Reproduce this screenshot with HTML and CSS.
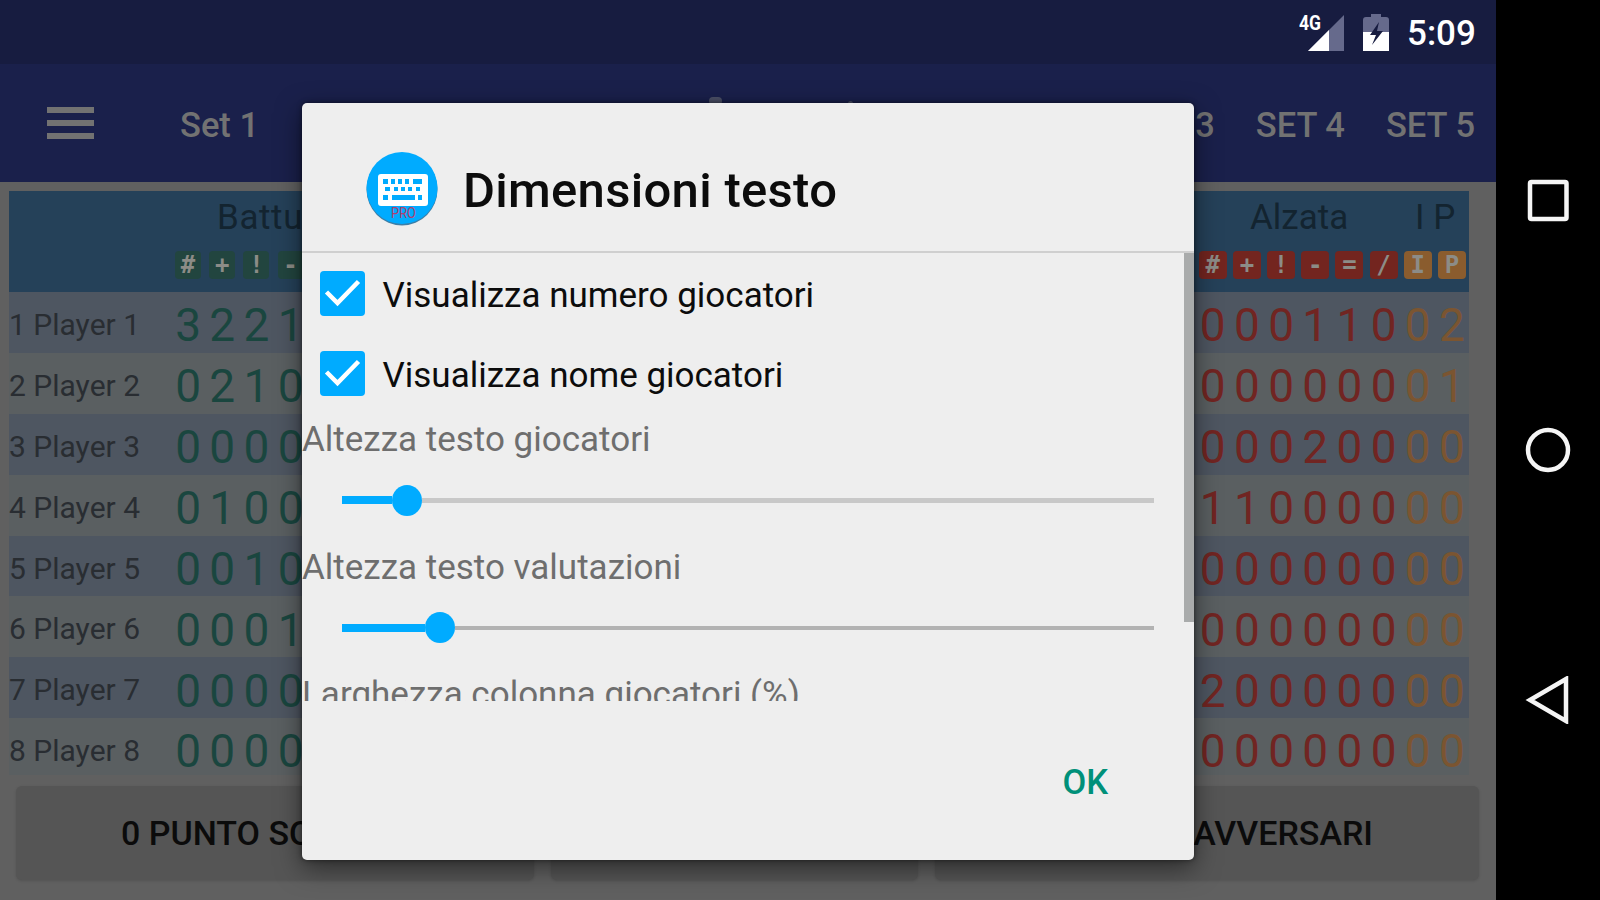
FILE: index.html
```html
<!DOCTYPE html>
<html lang="it">
  <head>
    <title>Dimensioni testo</title>
    <meta charset="utf-8" />
    <link rel="stylesheet" href="styles.css">
  </head>
  <body>
    <div class="screen">
      <div class="status-bar">
        <svg class="signal" width="48" height="40" viewBox="0 0 48 40">
          <path d="M45 2V38H9z" fill="#666a8c" />
          <path d="M30 17V38H9z" fill="#fff" />
          <text x="0" y="17" class="network" textLength="22" lengthAdjust="spacingAndGlyphs">4G</text>
        </svg>
        <svg class="battery" width="26" height="38" viewBox="0 0 26 38">
          <path d="M8 4V1h10v3h5q3 0 3 3V19H0V7q0-3 3-3z" fill="#666a8c" />
          <path d="M0 19H26V38H0z" fill="#fff" />
          <path d="M16 9L7 22h6L9 32l11-14h-6z" fill="#171c40" />
        </svg>
        <span class="clock">5:09</span>
      </div>

      <div class="toolbar">
        <div class="menu-icon"><i></i><i></i><i></i></div>
        <b class="title">Set 1</b>
        <div class="sets"><span>SET 3</span><span>SET 4</span><span>SET 5</span></div>
      </div>

      <div class="scores">
        <div class="scores-head">
          <div class="groups"><span class="serve">Battuta</span><span class="set">Alzata</span><span class="ip">I P</span></div>
          <div class="badges" id="badges"></div>
        </div>
        <div id="rows"></div>
      </div>

      <div class="points">
        <div class="point home"><span>0 PUNTO SQUADRA</span></div>
        <div class="point undo"></div>
        <div class="point away"><span>0 PUNTO AVVERSARI</span></div>
      </div>
    </div>

    <div class="nav-bar">
      <svg width="48" height="48" viewBox="0 0 48 48"><rect x="6" y="6" width="36.500" height="37" rx="1.500" /></svg>
      <svg width="48" height="48" viewBox="0 0 48 48"><circle cx="24" cy="24" r="20" /></svg>
      <svg width="48" height="48" viewBox="0 0 48 48"><path d="M42 3V45L6 24z" /></svg>
    </div>

    <div class="peek"><i></i><i></i></div>

    <div class="dialog">
      <div class="dialog-head">
        <svg width="72" height="74" viewBox="0 0 72 74">
          <ellipse cx="36" cy="37.500" rx="35.500" ry="36" fill="#3c7fa8" />
          <ellipse cx="36" cy="36" rx="35.500" ry="36" fill="#00abff" />
          <rect x="12" y="22" width="50" height="32" rx="3" fill="#fff" />
          <g fill="#00abff">
            <path d="M17 27h5v5h-5zM25 27h4v5h-4zM32 27h4v5h-4zM39 27h4v5h-4zM47 27h9v5h-9z" />
            <path d="M19 35h5v4h-5zM28 35h4v4h-4zM35 35h4v4h-4zM42 35h4v4h-4zM50 35h4v4h-4z" />
            <path d="M17 43h5v5h-5zM26 43h23v5h-23zM52 43h4v5h-4z" />
          </g>
          <text x="25" y="66" class="pro" textLength="25" lengthAdjust="spacingAndGlyphs">PRO</text>
        </svg>
        <h1>Dimensioni testo</h1>
      </div>

      <div class="dialog-body">
        <div class="options">
          <label class="check">
            <svg width="45" height="45" viewBox="0 0 45 45"><rect width="45" height="45" rx="4" /><path d="M6.500 21L17.500 32L38.500 10.500" /></svg>
            <span>Visualizza numero giocatori</span>
          </label>
          <label class="check">
            <svg width="45" height="45" viewBox="0 0 45 45"><rect width="45" height="45" rx="4" /><path d="M6.500 21L17.500 32L38.500 10.500" /></svg>
            <span>Visualizza nome giocatori</span>
          </label>
          <p>Altezza testo giocatori</p>
          <div class="slider players"><i class="filled"></i><i class="thumb"></i><i class="rest"></i></div>
          <p>Altezza testo valutazioni</p>
          <div class="slider ratings"><i class="filled"></i><i class="thumb"></i><i class="rest"></i></div>
          <p>Larghezza colonna giocatori (%)</p>
        </div>
        <div class="scrollbar"></div>
      </div>

      <div class="dialog-foot"><b>OK</b></div>
    </div>

    <script>
      // first four serve ratings, then the six set ratings plus I and P
      const players = [
        ["3221", "00011002"],
        ["0210", "00000001"],
        ["0000", "00020000"],
        ["0100", "11000000"],
        ["0010", "00000000"],
        ["0001", "00000000"],
        ["0000", "20000000"],
        ["0000", "00000000"],
      ]

      function cells(left, right) {
        const all = [...left].map(c => `<span class="cell green"><i>${c}</i></span>`)
        all.push('<span class="spacer"></span>')

        ;[...right].forEach((c, i) => {
          all.push(`<span class="cell ${i < 6 ? "red" : "orange"}"><i>${c}</i></span>`)
        })

        return all.join("")
      }

      document.getElementById("badges").innerHTML = cells("#+!-", "#+!-=/IP")

      document.getElementById("rows").innerHTML = players
        .map((p, i) => `<div class="row"><span class="name">${i + 1} Player ${i + 1}</span>${cells(p[0], p[1])}</div>`)
        .join("")
    </script>
  </body>
</html>
```

FILE: styles.css
```css
* {
  box-sizing: border-box;
}

body {
  display: flex;
  width: 1600px;
  height: 900px;
  margin: 0;
  overflow: hidden;
  background: #000;
  font-family: Roboto, sans-serif;
}

i {
  font-style: normal;
}

.screen {
  width: 1496px;
  height: 900px;
  background: #606060;
}

.status-bar {
  display: flex;
  height: 64px;
  padding: 13px 22px 0 0;
  justify-content: flex-end;
  background: #171c40;
}

.signal {
  margin-right: 16px;
}

.network {
  font-size: 21px;
  font-weight: bold;
  fill: #fff;
}

.battery {
  margin-right: 18px;
}

.clock {
  width: 67px;
  color: #fff;
  font-size: 35px;
  font-weight: 500;
  line-height: 42px;
  white-space: nowrap;
}

.toolbar {
  display: flex;
  height: 118px;
  padding: 0 21px 0 47px;
  align-items: center;
  background: #1a204b;
  color: #727272;
  font-size: 34.5px;
  font-weight: 500;
}

.menu-icon {
  display: flex;
  width: 47px;
  flex-direction: column;
  gap: 7px;
}

.menu-icon i {
  height: 6px;
  background: #727272;
}

.title {
  margin-left: 86px;
  font-weight: 500;
}

.title,
.sets {
  padding-top: 3px;
}

.sets {
  display: flex;
  margin-left: auto;
  gap: 41px;
}

.scores {
  width: 1469px;
  margin-top: 9px;
  padding-left: 9px;
}

.scores-head {
  height: 101px;
  background: #254159;
}

.groups {
  display: flex;
  height: 60px;
  padding: 5px 0 0 208px;
  color: #132430;
  font-size: 35px;
  line-height: 44px;
}

.serve {
  width: 1033px;
  letter-spacing: 0.6px;
}

.set {
  width: 165px;
}

.badges {
  display: flex;
  padding-left: 162px;
}

.badges .cell {
  height: 32px;
}

.badges i {
  width: 28px;
  height: 28px;
  border-radius: 4px;
  color: #8c8c87;
  font-family: "DejaVu Sans Mono", monospace;
  font-size: 24px;
  font-weight: bold;
  line-height: 28px;
}

.badges .green i {
  width: 26px;
  background: #22453f;
}

.badges .red i {
  background: #73251f;
}

.badges .orange i {
  background: #8a5c2e;
}

.row {
  display: flex;
  height: 60.9px;
  padding-top: 4px;
  align-items: center;
  background: #5a5f61;
}

.row:nth-child(odd) {
  background: #4e5661;
}

.row:last-child {
  height: 57px;
  padding-top: 3px;
}

.name {
  width: 162px;
  flex: none;
  color: #292d32;
  font-size: 30px;
  white-space: nowrap;
}

.row:last-child > * {
  margin-top: 4px;
}

.cell {
  width: 34.18px;
  flex: none;
  text-align: center;
}

.cell i {
  display: inline-block;
}

.row .cell {
  padding-top: 2px;
  font-size: 46px;
  line-height: 56px;
}

.row .green {
  color: #1a463f;
}

.row .red {
  color: #712522;
}

.row .orange {
  color: #7b5531;
}

.spacer {
  flex: 1;
}

.points {
  display: flex;
  height: 94px;
  margin: 11px 17px 0 16px;
  gap: 17px;
}

.point {
  border-radius: 6px;
  background: #555;
  box-shadow: 0 1px 3px rgba(0, 0, 0, 0.15);
  color: #0b0b0b;
  font-size: 34px;
  font-weight: 500;
  line-height: 94px;
  white-space: nowrap;
}

.home {
  width: 518px;
  padding-left: 105px;
}

.undo {
  width: 367px;
}

.away {
  flex: 1;
  padding-right: 106px;
  text-align: right;
}

.nav-bar {
  display: flex;
  width: 104px;
  padding: 176px 0;
  flex-direction: column;
  justify-content: space-between;
  align-items: center;
}

.nav-bar svg {
  fill: none;
  stroke: #f5f5f5;
  stroke-width: 4.5;
}

/* tops of the letters showing above the dialog */
.peek {
  display: flex;
  position: absolute;
  top: 97px;
  left: 709px;
  gap: 126px;
}

.peek i {
  width: 13px;
  height: 8px;
  border-radius: 4px;
  background: #4c5067;
}

.peek i + i {
  width: 5px;
  margin-top: 4px;
}

.dialog {
  display: flex;
  position: absolute;
  top: 103px;
  left: 302px;
  width: 892px;
  height: 757px;
  flex-direction: column;
  border-radius: 5px;
  background: #eee;
  box-shadow: 0 8px 26px rgba(0, 0, 0, 0.5), 0 0 5px rgba(0, 0, 0, 0.5);
}

.dialog-head {
  display: flex;
  height: 150px;
  padding: 49px 0 0 64px;
  align-items: flex-start;
  border-bottom: 2px solid #cfcfcf;
}

.pro {
  fill: #b04070;
  font-size: 15px;
}

h1 {
  margin: 10px 0 0 25px;
  color: #0c0c0c;
  font-size: 49px;
  font-weight: 500;
  letter-spacing: 0.3px;
  line-height: 57px;
}

.dialog-body {
  display: flex;
  height: 448px;
  overflow: hidden;
}

.options {
  width: 882px;
  padding-top: 18px;
}

.check {
  display: flex;
  height: 79.500px;
  padding-left: 17.500px;
  gap: 18px;
  color: #0c0c0c;
  font-size: 35px;
  line-height: 49px;
}

.check svg {
  fill: #00abff;
}

.check path {
  fill: none;
  stroke: #fff;
  stroke-width: 4.5;
}

p {
  height: 40px;
  margin: 0;
  color: #6e6e6e;
  font-size: 35px;
  line-height: 43px;
}

.check + p {
  margin-top: -12px;
}

.slider {
  display: flex;
  height: 87.500px;
  padding: 0 30px 3px 40px;
  align-items: center;
}

.filled {
  height: 8px;
  background: #00abff;
}

.players .filled {
  width: 50px;
}

.ratings .filled {
  width: 83px;
}

.thumb {
  width: 30px;
  height: 31px;
  border-radius: 50%;
  background: #00abff;
}

.rest {
  height: 5px;
  flex: 1;
  background: #c8c8c8;
}

.ratings .rest {
  height: 4px;
  background: #b2b2b2;
}

.scrollbar {
  width: 10px;
  height: 369px;
  background: #a9abab;
}

.dialog-foot {
  padding: 61px 86px 0 0;
  color: #009079;
  font-size: 34.5px;
  line-height: 40px;
  text-align: right;
}

.dialog-foot b {
  font-weight: 500;
}
```
